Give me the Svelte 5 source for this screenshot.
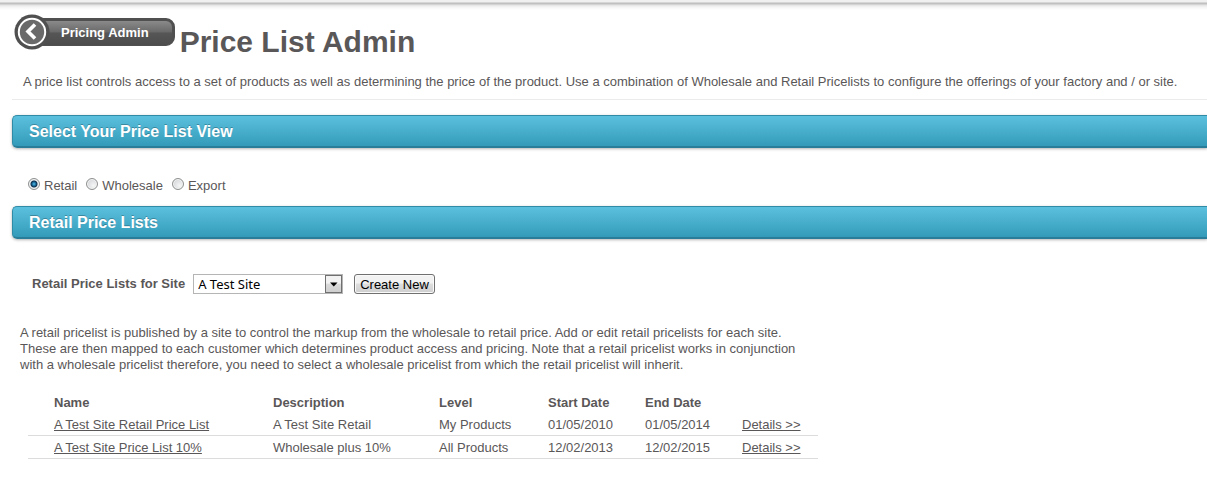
<script lang="ts">
  type PriceList = {
    name: string;
    description: string;
    level: string;
    start: string;
    end: string;
  };

  const views = ['Retail', 'Wholesale', 'Export'];
  const sites = ['A Test Site'];

  const priceLists: PriceList[] = [
    {
      name: 'A Test Site Retail Price List',
      description: 'A Test Site Retail',
      level: 'My Products',
      start: '01/05/2010',
      end: '01/05/2014'
    },
    {
      name: 'A Test Site Price List 10%',
      description: 'Wholesale plus 10%',
      level: 'All Products',
      start: '12/02/2013',
      end: '12/02/2015'
    }
  ];

  let view = $state('Retail');
  let site = $state('A Test Site');
</script>

<div class="top-edge"></div>

<main class="page">
  <header class="title-row">
    <a class="back" href="#pricing">
      <svg class="back-icon" viewBox="0 0 36 36" aria-hidden="true">
        <circle cx="18" cy="18" r="17.5" fill="#505050" />
        <circle cx="18" cy="18" r="13.2" fill="#6a6a6a" stroke="#fff" stroke-width="2" />
        <path d="M21 10.5 L14 17.5 L21 24.5" fill="none" stroke="#fff" stroke-width="3.6" />
      </svg>
      <span class="back-label">Pricing Admin</span>
    </a>
    <h1>Price List Admin</h1>
  </header>

  <p class="intro">
    A price list controls access to a set of products as well as determining the price of the product. Use a
    combination of Wholesale and Retail Pricelists to configure the offerings of your factory and / or site.
  </p>

  <h2 class="bar">Select Your Price List View</h2>

  <div class="views" role="radiogroup" aria-label="Price list view">
    {#each views as option}
      <label>
        <input type="radio" name="view" value={option} bind:group={view} />
        {option}
      </label>
    {/each}
  </div>

  <h2 class="bar">Retail Price Lists</h2>

  <div class="site-row">
    <label for="site">Retail Price Lists for Site</label>
    <div class="select">
      <select id="site" bind:value={site}>
        {#each sites as s}
          <option value={s}>{s}</option>
        {/each}
      </select>
      <svg class="select-arrow" viewBox="0 0 15 16" aria-hidden="true">
        <path d="M4 6.5 H11.5 L7.75 10.5 Z" fill="#000" />
      </svg>
    </div>
    <button type="button" class="create">Create New</button>
  </div>

  <p class="help">
    A retail pricelist is published by a site to control the markup from the wholesale to retail price. Add or edit
    retail pricelists for each site. These are then mapped to each customer which determines product access and
    pricing. Note that a retail pricelist works in conjunction with a wholesale pricelist therefore, you need to
    select a wholesale pricelist from which the retail pricelist will inherit.
  </p>

  <table>
    <colgroup>
      <col class="col-name" />
      <col class="col-description" />
      <col class="col-level" />
      <col class="col-date" />
      <col class="col-date" />
      <col />
    </colgroup>
    <thead>
      <tr>
        <th>Name</th>
        <th>Description</th>
        <th>Level</th>
        <th>Start Date</th>
        <th>End Date</th>
        <td></td>
      </tr>
    </thead>
    <tbody>
      {#each priceLists as list}
        <tr>
          <td><a href="#edit">{list.name}</a></td>
          <td>{list.description}</td>
          <td>{list.level}</td>
          <td>{list.start}</td>
          <td>{list.end}</td>
          <td><a href="#details">Details &gt;&gt;</a></td>
        </tr>
      {/each}
    </tbody>
  </table>
</main>

<style>
  :global(body) {
    background: #fff;
    color: #5a5758;
    font-family: 'Liberation Sans', Arial, sans-serif;
    font-size: 13px;
    line-height: 16px;
    overflow-x: hidden;
  }

  .top-edge {
    height: 10px;
    background: linear-gradient(#f0f0f0 2px, #bcbcbc 3px, #c4c4c4 4px, #e2e2e2 5px, #f4f4f4 7px, #fff 10px);
  }

  .page {
    padding-left: 12px;
  }

  .title-row {
    display: flex;
    align-items: flex-start;
    gap: 5px;
    padding: 4px 0 0 2px;
  }

  .back {
    display: flex;
    align-items: center;
    color: #fff;
    font-weight: bold;
    text-decoration: none;
  }

  .back-icon {
    width: 36px;
    height: 36px;
    z-index: 1;
  }

  .back-label {
    box-sizing: border-box;
    height: 28px;
    margin-left: -16px;
    padding: 4px 23px 4px 24px;
    border: 3px solid #505050;
    border-width: 3px 3px 1px;
    border-radius: 9px;
    background: linear-gradient(#8a8a8a, #6a6a6a 45%, #565656 50%, #4c4c4c);
    line-height: 16px;
  }

  h1 {
    margin: 10px 0 0;
    font-size: 30px;
    line-height: 36px;
  }

  .intro {
    margin: 0;
    padding: 14px 11px 9px;
    border-bottom: 1px solid #ebebeb;
  }

  .bar {
    box-sizing: border-box;
    height: 33px;
    margin: 15px 0 0;
    padding: 0 16px;
    border: 1px solid #2f8ba6;
    border-right: 0;
    border-bottom: 2px solid #2a7d98;
    border-radius: 5px 0 0 5px;
    background: linear-gradient(#5bc0de, #339bb9);
    box-shadow: 0 1px 3px rgba(0, 0, 0, 0.3);
    color: #fff;
    font-size: 16px;
    line-height: 32px;
    text-shadow: 0 -1px 0 rgba(0, 0, 0, 0.25);
  }

  .views {
    display: flex;
    gap: 9px;
    padding: 30px 16px 0;
  }

  .views + .bar {
    margin-top: 12px;
  }

  .views label {
    display: flex;
    gap: 4px;
  }

  .views input {
    appearance: none;
    width: 12px;
    height: 12px;
    margin: 0;
    border: 1px solid #8e8f8f;
    border-radius: 50%;
    background: radial-gradient(circle at 65% 65%, #f6f6f6, #c9cdd1);
    box-shadow: inset 0 0 0 1px #f4f4f4;
  }

  .views input:checked {
    background: radial-gradient(circle, #4fc0ee 0, #17608e 2px, #0d2f4c 3px, #dde1e5 4px);
  }

  .site-row {
    display: flex;
    align-items: center;
    padding: 35px 20px 0;
  }

  .site-row label {
    font-weight: bold;
  }

  .select {
    position: relative;
    width: 150px;
    margin: 0 11px 0 8px;
  }

  select {
    appearance: none;
    display: block;
    box-sizing: border-box;
    width: 100%;
    height: 20px;
    padding: 0 20px 0 4px;
    border: 1px solid #b5b5b5;
    border-radius: 0;
    background: #fff;
    color: #000;
    font-family: 'Noto Sans', sans-serif;
    font-size: 13px;
  }

  .select-arrow {
    position: absolute;
    top: 1px;
    right: 1px;
    box-sizing: border-box;
    width: 17px;
    height: 18px;
    border: 1px solid #707070;
    background: linear-gradient(#f2f2f2 45%, #dadada 50%, #cfcfcf);
    pointer-events: none;
  }

  .create {
    height: 20px;
    padding: 0 5px;
    border: 1px solid #707070;
    border-radius: 3px;
    background: linear-gradient(#f2f2f2 45%, #dddddd 50%, #cfcfcf);
    box-shadow: inset 0 0 0 1px #fafafa;
    color: #000;
    font-family: inherit;
    font-size: 13px;
  }

  .help {
    max-width: 790px;
    margin: 31px 0 0;
    padding-left: 8px;
  }

  table {
    width: 790px;
    margin: 19px 0 0 16px;
    border-collapse: collapse;
    table-layout: fixed;
  }

  th,
  td {
    padding: 4px 0 2px;
    text-align: left;
  }

  th {
    padding: 3px 0 2px;
  }

  tbody td {
    border-bottom: 1px solid #dcdcdc;
  }

  th:first-child,
  td:first-child {
    padding-left: 26px;
  }

  .col-name {
    width: 245px;
  }

  .col-description {
    width: 166px;
  }

  .col-level {
    width: 109px;
  }

  .col-date {
    width: 97px;
  }

  table a {
    color: inherit;
  }
</style>
